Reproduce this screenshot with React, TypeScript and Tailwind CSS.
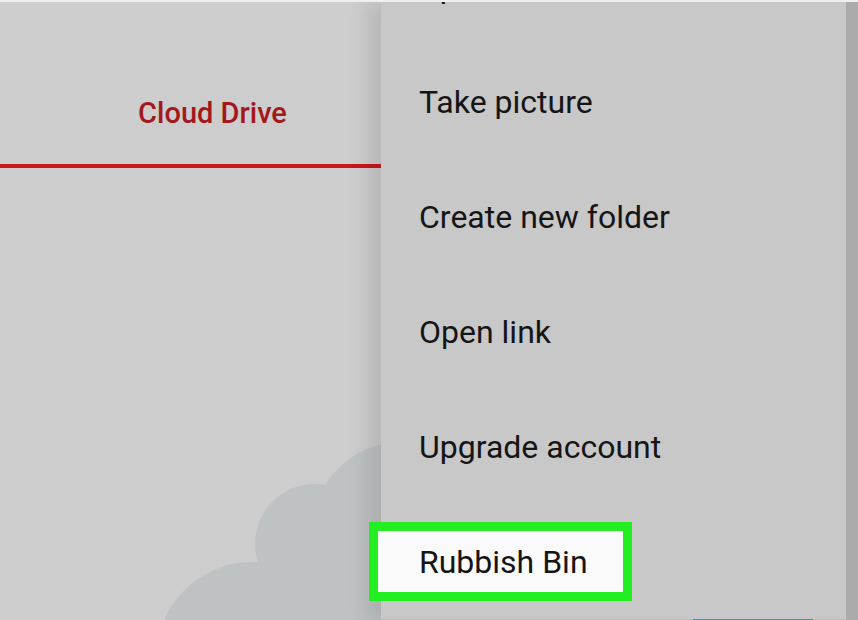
export default function App() {
  const items = ["Upload", "Take picture", "Create new folder", "Open link", "Upgrade account"];

  return (
    <div className="relative flex h-[620px] w-[858px] flex-col overflow-hidden bg-[#cdcdcd] font-['Roboto',sans-serif]">
      <div className="relative z-30 h-[2px] w-full shrink-0 bg-[#efefef]" />
      <div className="relative flex flex-1">
        {/* cloud backdrop */}
        <svg
          className="absolute left-[140px] top-[420px]"
          width="320"
          height="220"
          viewBox="0 0 320 220"
        >
          <g fill="#bec2c2">
            <circle cx="175" cy="122" r="60" />
            <circle cx="262" cy="110" r="90" />
            <circle cx="112" cy="235" r="95" />
            <rect x="112" y="150" width="208" height="80" />
          </g>
        </svg>

        <div className="relative flex w-[381px] shrink-0 flex-col">
          <div className="flex h-[162px] items-end justify-center pb-[29px] pl-[44px]">
            <span className="text-[29px] font-medium text-[#a3181b]">Cloud Drive</span>
          </div>
          <div className="h-[4px] w-full bg-[#c9171d]" />
        </div>

        <div className="relative z-10 flex flex-1 flex-col bg-[#c8c8c8] shadow-[-14px_0_18px_rgba(0,0,0,0.10)]">
          <div className="min-h-0 flex-1">
            <div className="-mt-[73px] flex flex-col">
              {items.map((label) => (
                <div key={label} className="flex h-[115px] shrink-0 items-center pl-[38px] text-[32px] text-[#151515]">
                  {label}
                </div>
              ))}
              <div className="flex h-[115px] shrink-0 items-center">
                <div className="-ml-[12px] flex h-[79px] w-[263px] items-center border-[9px] border-[#22ee22] bg-[#fafafa] pl-[41px] text-[32px] text-[#151515]">
                  Rubbish Bin
                </div>
              </div>
            </div>
          </div>
          <div className="relative flex h-[3px] shrink-0 bg-[#bdbdbd]">
            <div className="ml-[312px] w-[120px] bg-[#3f9a98]" />
          </div>
        </div>

        <div className="relative z-20 w-[12px] shrink-0 bg-[#ababab]" />
      </div>
    </div>
  );
}
